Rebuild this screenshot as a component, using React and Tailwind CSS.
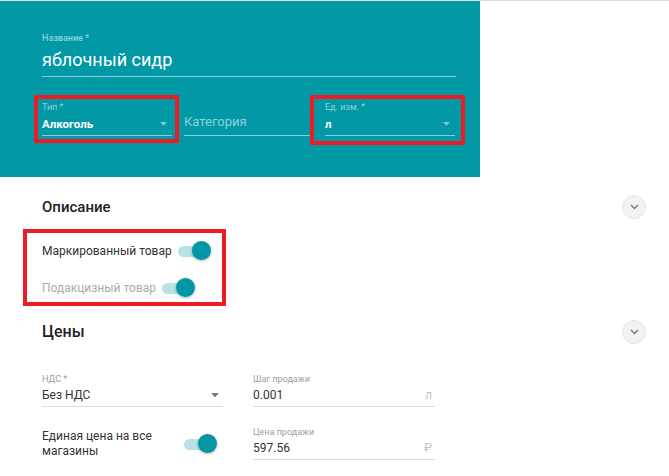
import React from 'react';

const Arrow = ({ className, size = 8 }) => (
  <svg width={size} height={size * 0.6} viewBox="0 0 8 5" className={className}>
    <path d="M0 0 L8 0 L4 4.5 Z" fill="currentColor" />
  </svg>
);

const Chevron = () => (
  <div className="w-[24px] h-[24px] rounded-full bg-[#f2f2f2] border border-[#e6e6e6] flex items-center justify-center">
    <svg width="9" height="6" viewBox="0 0 9 6">
      <path d="M1 1 L4.5 4.5 L8 1" stroke="#777" strokeWidth="1.4" fill="none" />
    </svg>
  </div>
);

const Toggle = () => (
  <div className="relative w-[33px] h-[20px] flex items-center">
    <div className="w-[30px] h-[11px] rounded-full bg-[#b9e2e6]" />
    <div className="absolute right-0 top-0 w-[19px] h-[19px] rounded-full bg-[#0397a5] shadow-[0_1px_3px_rgba(0,0,0,0.3)]" />
  </div>
);

// поле в бирюзовой шапке
const TealSelect = ({ label, value }) => (
  <div className="border-b border-[#86cfd6]">
    <div className="mt-[2px] text-[9px] leading-[12px] text-[#8fd2d9]">{label}</div>
    <div className="mt-[3px] mb-[3px] h-[16px] flex items-center justify-between">
      <span className="text-[11.5px] leading-[16px] font-bold text-white">{value}</span>
      <Arrow size={7} className="text-[#7fc9d1] mr-[5px]" />
    </div>
  </div>
);

const Field = ({ label, value, suffix, arrow }) => (
  <div className="border-b border-[#dcdcdc]">
    <div className="text-[9px] leading-[12px] text-[#9e9e9e]">{label}</div>
    <div className="mt-[2px] mb-[3px] h-[16px] flex items-center justify-between">
      <span className="text-[12px] leading-[16px] text-[#333]">{value}</span>
      {arrow ? <Arrow className="text-[#777] mr-[4px]" /> : null}
      {suffix ? <span className="text-[12px] text-[#c4c4c4] mr-[3px]">{suffix}</span> : null}
    </div>
  </div>
);

const App = () => {
  return (
    <div className="w-[669px] h-[476px] bg-white border-t border-[#dcdcdc] overflow-hidden font-['Roboto',sans-serif]">
      <div className="w-[480px] h-[176px] bg-[#0398a6] pt-[31px]">
        <div className="ml-[42px] w-[414px] border-b border-[#86cfd6]">
          <div className="text-[9px] leading-[12px] font-medium text-[#8fd2d9]">Название *</div>
          <div className="mt-[4px] mb-[4px] text-[18px] leading-[24px] text-white">яблочный сидр</div>
        </div>
        <div className="flex items-start mt-[18px] pl-[34px]">
          <div className="w-[145px] h-[48px] border-[4px] border-[#ec1c24] pl-[4px] pr-[3px]">
            <TealSelect label="Тип *" value="Алкоголь" />
          </div>
          <div className="ml-[5px] w-[126px] border-b border-[#86cfd6]">
            <div className="mt-[19px] mb-[5px] text-[13px] leading-[16px] text-[#8fd2d9]">Категория</div>
          </div>
          <div className="w-[155px] h-[50px] border-[4px] border-[#ec1c24] pl-[11px] pr-[6px]">
            <TealSelect label="Ед. изм. *" value="л" />
          </div>
        </div>
      </div>

      <div className="flex items-center justify-between mt-[18px] pl-[42px] pr-[23px] h-[24px]">
        <span className="text-[15px] font-medium text-[#222]">Описание</span>
        <Chevron />
      </div>

      <div className="ml-[23px] mt-[10px] w-[203px] h-[77px] border-[4px] border-[#ec1c24] pl-[15px] pt-[8px]">
        <div className="flex items-center gap-[6px] h-[20px]">
          <span className="text-[12px] text-[#333]">Маркированный товар</span>
          <Toggle />
        </div>
        <div className="flex items-center gap-[6px] h-[20px] mt-[17px]">
          <span className="text-[12px] text-[#aaa]">Подакцизный товар</span>
          <Toggle />
        </div>
      </div>

      <div className="flex items-center justify-between mt-[14px] pl-[42px] pr-[23px] h-[24px]">
        <span className="text-[16px] font-medium text-[#222]">Цены</span>
        <Chevron />
      </div>

      <div className="grid grid-cols-[181px_182px] gap-x-[30px] pl-[42px] mt-[29px]">
        <Field label="НДС *" value="Без НДС" arrow />
        <Field label="Шаг продажи" value="0.001" suffix="л" />
        <div className="flex items-center justify-between mt-[21px] pr-[6px]">
          <span className="text-[12px] leading-[15px] text-[#333]">Единая цена на все<br />магазины</span>
          <Toggle />
        </div>
        <div className="mt-[19px]">
          <Field label="Цена продажи" value="597.56" suffix="₽" />
        </div>
      </div>
    </div>
  );
};

export default App;
